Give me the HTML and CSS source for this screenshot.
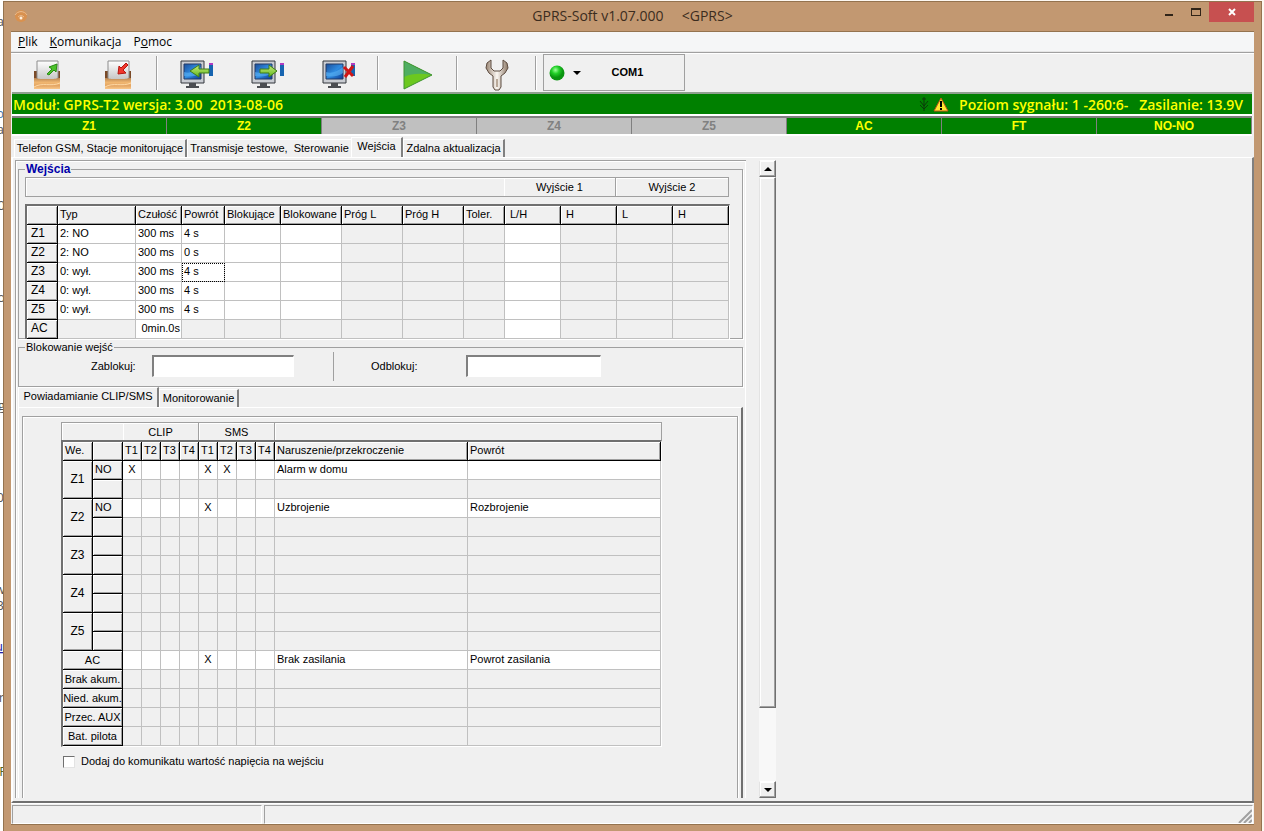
FILE: index.html
```html
<!DOCTYPE html>
<html lang="pl">
<head>
    <meta charset="UTF-8">
    <meta name="viewport" content="width=device-width, initial-scale=1.0">
    <title>GPRS-Soft v1.07.000</title>
    <link rel="stylesheet" href="styles.css">
</head>
<body>
    <!-- page visible behind the window -->
    <svg class="behind" width="3" height="831" aria-hidden="true">
        <g font-family="Open Sans, sans-serif" font-size="13" text-anchor="end" fill="#555">
            <text x="4" y="26">a</text>
            <text x="4" y="118" fill="#47a">b</text>
            <text x="4" y="134">a</text>
            <text x="5" y="210">0</text>
            <text x="5" y="302">o</text>
            <text x="5" y="410">g</text>
            <text x="4" y="502">0</text>
            <text x="5" y="594">w</text>
            <text x="4" y="610">3</text>
            <text x="3" y="651" fill="#22a" text-decoration="underline">u</text>
            <text x="4" y="702">r</text>
            <text x="6" y="776" fill="#562">F</text>
        </g>
    </svg>

    <div class="window">
        <header class="titlebar">
            <svg class="app-icon" width="16" height="16" viewBox="0 0 16 16">
                <circle cx="8" cy="8" r="6" fill="#d9914f"/>
                <path d="M2 7a7 7 0 0 1 12 0M5 9a4 4 0 0 1 6 0" fill="none" stroke="#e8bd92"/>
                <circle cx="8" cy="10" r="1.500" fill="#fff0dd"/>
            </svg>
            <h1>GPRS-Soft v1.07.000 &nbsp;&nbsp;&nbsp; &lt;GPRS&gt;</h1>
            <div class="window-buttons">
                <button type="button" aria-label="Minimalizuj"><svg width="10" height="10"><path d="M1 7h8v2H1z" fill="#302418"/></svg></button>
                <button type="button" aria-label="Maksymalizuj"><svg width="10" height="10"><path d="M0 1h10v8H0zM1 3v5h8V3z" fill="#302418" fill-rule="evenodd"/></svg></button>
                <button type="button" class="close" aria-label="Zamknij"><svg width="8" height="8"><path d="M1 1l6 6M7 1l-6 6" stroke="#fff" stroke-width="2"/></svg></button>
            </div>
        </header>

        <div class="client">
            <nav class="menu">
                <button type="button"><u>P</u>lik</button>
                <button type="button"><u>K</u>omunikacja</button>
                <button type="button">P<u>o</u>moc</button>
            </nav>

            <div class="toolbar">
                <svg class="defs" width="0" height="0">
                    <defs>
                        <linearGradient id="wood" x2="0" y2="1"><stop offset="0" stop-color="#b98655"/><stop offset=".4" stop-color="#f0b670"/><stop offset=".7" stop-color="#e3a564"/><stop offset="1" stop-color="#fac889"/></linearGradient>
                        <linearGradient id="screen" x2="1" y2="1"><stop offset="0" stop-color="#1a4f9c"/><stop offset=".5" stop-color="#2f8be0"/><stop offset="1" stop-color="#0c3c96"/></linearGradient>
                        <linearGradient id="lime" x2="0" y2="1"><stop offset="0" stop-color="#c9ef7a"/><stop offset="1" stop-color="#5fb51c"/></linearGradient>
                        <linearGradient id="steel" x2="1"><stop offset="0" stop-color="#9a8674"/><stop offset=".5" stop-color="#fbf7f2"/><stop offset="1" stop-color="#8b7765"/></linearGradient>
                        <linearGradient id="paper" x2="0" y2="1"><stop offset="0" stop-color="#fff"/><stop offset="1" stop-color="#c4c4c4"/></linearGradient>
                        <radialGradient id="led" cx=".4" cy=".3"><stop offset="0" stop-color="#a0ff9c"/><stop offset=".5" stop-color="#22d028"/><stop offset="1" stop-color="#0a9410"/></radialGradient>
                        <g id="box">
                            <path d="M1 11h26v18H1z" fill="#7a4a28"/>
                            <path d="M4 1h21v19H4z" fill="url(#paper)" stroke="#8d8d8d"/>
                            <path d="M1 18c4 0 3 1 8 1h10c5 0 4-1 8-1v11H1z" fill="url(#wood)"/>
                            <path d="M1 27c8-5 17 0 26-4" fill="none" stroke="#ffd9a5"/>
                        </g>
                        <g id="monitor">
                            <path d="M1 1h23v22H1z" fill="#c9ccd2" stroke="#33363c"/>
                            <path d="M4 4h17v15H4z" fill="url(#screen)" stroke="#223a66"/>
                            <path d="M4 12c6 2 12-1 17-5v6c-6 4-11 4-17 3z" fill="#5cb4f5" opacity=".6"/>
                            <path d="M9 23h7v3h3v2H6v-2h3z" fill="#4b4d52"/>
                            <path d="M29 3h4v13h-4z" fill="#1664b0"/><path d="M29 3h4v2h-4z" fill="#b03bc0"/>
                        </g>
                    </defs>
                </svg>
                <button type="button" class="tool" aria-label="Otwórz"><svg width="28" height="30"><use href="#box"/><path d="M14 14l5-5-3-2 8-3-1 8-2-2-5 5z" fill="#4cc22c" stroke="#2a8b16"/></svg></button>
                <button type="button" class="tool" aria-label="Zapisz"><svg width="28" height="30"><use href="#box"/><path d="M22 3l-5 5-2-2-1 8 8-1-3-3 5-5z" fill="#f0372c" stroke="#b5150f"/></svg></button>
                <span class="sep"></span>
                <button type="button" class="tool" aria-label="Odczyt"><svg width="34" height="30"><use href="#monitor"/><path d="M10 11l9-6v4h10v4H19v4z" fill="url(#lime)" stroke="#3f7d18"/></svg></button>
                <button type="button" class="tool" aria-label="Wyślij"><svg width="34" height="30"><use href="#monitor"/><path d="M26 11l-8-6v4H9v4h9v4z" fill="url(#lime)" stroke="#3f7d18"/></svg></button>
                <button type="button" class="tool" aria-label="Rozłącz"><svg width="34" height="30"><use href="#monitor"/><path d="M22 7l9 9M31 6l-8 11" stroke="#cf1616" stroke-width="3"/></svg></button>
                <span class="sep"></span>
                <button type="button" class="tool" aria-label="Start"><svg width="30" height="30"><path d="M1 1v28l28-14z" fill="#6cc81f"/><path d="M1 1v16c8-4 18-4 28-2z" fill="#4fae62"/><path d="M1 1v28l28-14z" fill="none" stroke="#3f9430"/></svg></button>
                <span class="sep"></span>
                <button type="button" class="tool" aria-label="Ustawienia"><svg width="24" height="32"><path d="M6 1L2 4 1 9l3 5 4 3v11l2 3h4l2-3V17l4-3 3-5-1-5-4-3v8l-3 3H9L6 9z" fill="url(#steel)" stroke="#5d4c40"/><path d="M11 20h2v8h-2z" fill="#b9a999"/></svg></button>
                <span class="sep"></span>
                <button type="button" class="port">
                    <svg width="16" height="16"><circle cx="8" cy="8" r="7.500" fill="url(#led)"/></svg>
                    <svg width="8" height="4"><path d="M0 0h8L4 4z"/></svg>
                    <span>COM1</span>
                </button>
            </div>

            <div class="device">
                <span>Moduł: GPRS-T2 wersja: 3.00 &nbsp;2013-08-06</span>
                <span class="signal">
                    <svg width="10" height="14"><path d="M5 0v14M1 4l4 5 4-5M1 8l4 4 4-4M3 2h4" fill="none" stroke="#0a3a0a"/></svg>
                    <svg width="16" height="15"><path d="M8 1l7 13H1z" fill="#ffe92e" stroke="#c4521a"/><path d="M7 4h2v6H7zM7 11h2v2H7z"/></svg>
                    <span>Poziom sygnału: 1 -260:6- &nbsp;&nbsp;Zasilanie: 13.9V</span>
                </span>
            </div>

            <div class="zones">
                <span>Z1</span><span>Z2</span><span class="off">Z3</span><span class="off">Z4</span><span class="off">Z5</span><span>AC</span><span>FT</span><span>NO-NO</span>
            </div>

            <div class="tabs main-tabs">
                <button type="button" class="tab t1">Telefon GSM, Stacje monitorujące</button>
                <button type="button" class="tab t2">Transmisje testowe, &nbsp;Sterowanie</button>
                <button type="button" class="tab t3 active">Wejścia</button>
                <button type="button" class="tab t4">Zdalna aktualizacja</button>
            </div>

            <main class="page">
                <div class="panel">
                    <fieldset class="group">
                        <legend class="title">Wejścia</legend>
                        <div class="band outputs"><span></span><span>Wyjście 1</span><span>Wyjście 2</span></div>
                        <div class="sunken">
                            <table class="inputs">
                                <colgroup>
                                    <col class="c31"><col class="c78"><col class="c46"><col class="c43"><col class="c56"><col class="c61"><col class="c61"><col class="c61"><col class="c41"><col class="c56"><col class="c56"><col class="c56"><col class="c56">
                                </colgroup>
                                <thead>
                                    <tr><th></th><th>Typ</th><th>Czułość</th><th>Powrót</th><th>Blokujące</th><th>Blokowane</th><th>Próg L</th><th>Próg H</th><th>Toler.</th><th>L/H</th><th>H</th><th>L</th><th>H</th></tr>
                                </thead>
                                <tbody>
                                    <tr><th>Z1</th><td class="on">2: NO</td><td class="on">300 ms</td><td class="on">4 s</td><td class="on"></td><td class="on"></td><td></td><td></td><td></td><td class="on"></td><td></td><td></td><td></td></tr>
                                    <tr><th>Z2</th><td class="on">2: NO</td><td class="on">300 ms</td><td class="on">0 s</td><td class="on"></td><td class="on"></td><td></td><td></td><td></td><td class="on"></td><td></td><td></td><td></td></tr>
                                    <tr><th>Z3</th><td class="on">0: wył.</td><td class="on">300 ms</td><td class="on focus">4 s</td><td class="on"></td><td class="on"></td><td></td><td></td><td></td><td class="on"></td><td></td><td></td><td></td></tr>
                                    <tr><th>Z4</th><td class="on">0: wył.</td><td class="on">300 ms</td><td class="on">4 s</td><td class="on"></td><td class="on"></td><td></td><td></td><td></td><td class="on"></td><td></td><td></td><td></td></tr>
                                    <tr><th>Z5</th><td class="on">0: wył.</td><td class="on">300 ms</td><td class="on">4 s</td><td class="on"></td><td class="on"></td><td></td><td></td><td></td><td class="on"></td><td></td><td></td><td></td></tr>
                                    <tr><th>AC</th><td></td><td class="on right">0min.0s</td><td></td><td></td><td></td><td></td><td></td><td></td><td class="on"></td><td></td><td></td><td></td></tr>
                                </tbody>
                            </table>
                        </div>
                    </fieldset>

                    <fieldset>
                        <legend>Blokowanie wejść</legend>
                        <div class="locks">
                            <label for="lock">Zablokuj:</label>
                            <input type="text" id="lock">
                            <span class="divider"></span>
                            <label for="unlock">Odblokuj:</label>
                            <input type="text" id="unlock" class="short">
                        </div>
                    </fieldset>

                    <div class="tabs sub-tabs">
                        <button type="button" class="tab s1 active">Powiadamianie CLIP/SMS</button>
                        <button type="button" class="tab s2">Monitorowanie</button>
                    </div>

                    <div class="sub-page">
                        <div class="frame">
                            <div class="band channels"><span></span><span>CLIP</span><span>SMS</span><span></span></div>
                            <div class="sunken">
                                <table class="events">
                                    <colgroup>
                                        <col class="c30"><col class="c30"><col class="c19"><col class="c19"><col class="c19"><col class="c19"><col class="c19"><col class="c19"><col class="c19"><col class="c19"><col class="c193"><col class="c193">
                                    </colgroup>
                                    <thead>
                                        <tr><th>We.</th><th></th><th>T1</th><th>T2</th><th>T3</th><th>T4</th><th>T1</th><th>T2</th><th>T3</th><th>T4</th><th>Naruszenie/przekroczenie</th><th>Powrót</th></tr>
                                    </thead>
                                    <tbody>
                                        <tr class="on"><th rowspan="2">Z1</th><th class="kind">NO</th><td>X</td><td></td><td></td><td></td><td>X</td><td>X</td><td></td><td></td><td>Alarm w domu</td><td></td></tr>
                                        <tr><th></th><td></td><td></td><td></td><td></td><td></td><td></td><td></td><td></td><td></td><td></td></tr>
                                        <tr class="on"><th rowspan="2">Z2</th><th class="kind">NO</th><td></td><td></td><td></td><td></td><td>X</td><td></td><td></td><td></td><td>Uzbrojenie</td><td>Rozbrojenie</td></tr>
                                        <tr><th></th><td></td><td></td><td></td><td></td><td></td><td></td><td></td><td></td><td></td><td></td></tr>
                                        <tr><th rowspan="2">Z3</th><th></th><td></td><td></td><td></td><td></td><td></td><td></td><td></td><td></td><td></td><td></td></tr>
                                        <tr><th></th><td></td><td></td><td></td><td></td><td></td><td></td><td></td><td></td><td></td><td></td></tr>
                                        <tr><th rowspan="2">Z4</th><th></th><td></td><td></td><td></td><td></td><td></td><td></td><td></td><td></td><td></td><td></td></tr>
                                        <tr><th></th><td></td><td></td><td></td><td></td><td></td><td></td><td></td><td></td><td></td><td></td></tr>
                                        <tr><th rowspan="2">Z5</th><th></th><td></td><td></td><td></td><td></td><td></td><td></td><td></td><td></td><td></td><td></td></tr>
                                        <tr><th></th><td></td><td></td><td></td><td></td><td></td><td></td><td></td><td></td><td></td><td></td></tr>
                                        <tr class="on"><th colspan="2">AC</th><td></td><td></td><td></td><td></td><td>X</td><td></td><td></td><td></td><td>Brak zasilania</td><td>Powrot zasilania</td></tr>
                                        <tr><th colspan="2">Brak akum.</th><td></td><td></td><td></td><td></td><td></td><td></td><td></td><td></td><td></td><td></td></tr>
                                        <tr><th colspan="2">Nied. akum.</th><td></td><td></td><td></td><td></td><td></td><td></td><td></td><td></td><td></td><td></td></tr>
                                        <tr><th colspan="2">Przec. AUX</th><td></td><td></td><td></td><td></td><td></td><td></td><td></td><td></td><td></td><td></td></tr>
                                        <tr><th colspan="2">Bat. pilota</th><td></td><td></td><td></td><td></td><td></td><td></td><td></td><td></td><td></td><td></td></tr>
                                    </tbody>
                                </table>
                            </div>
                            <label class="check"><input type="checkbox"> Dodaj do komunikatu wartość napięcia na wejściu</label>
                        </div>
                    </div>
                </div>

                <div class="scrollbar">
                    <button type="button" aria-label="W górę"><svg width="8" height="4"><path d="M0 4h8L4 0z"/></svg></button>
                    <div class="thumb"></div>
                    <div class="track"></div>
                    <button type="button" aria-label="W dół"><svg width="8" height="4"><path d="M0 0h8L4 4z"/></svg></button>
                </div>
            </main>

            <footer class="status">
                <span class="cell first"></span>
                <span class="cell"><svg width="14" height="14"><path d="M1 14L14 1M6 14l8-8M11 14l3-3" stroke="#a0a0a0" stroke-width="2"/></svg></span>
            </footer>
        </div>
    </div>
</body>
</html>
```

FILE: styles.css
```css
* {
    box-sizing: border-box;
}
body {
    margin: 0;
    height: 100vh;
    display: flex;
    overflow: hidden;
    background: #fdf8f2;
    font-family: "Liberation Sans", Arial, sans-serif;
    font-size: 11px;
    line-height: 13px;
    color: #000;
}
button {
    font: inherit;
    color: inherit;
    margin: 0;
    padding: 0;
    border: 0;
    background: none;
}
svg {
    display: block;
    flex: none;
}
.behind {
    background: #fff;
}
.defs {
    position: absolute;
}

/* window */
.window {
    flex: 1;
    min-width: 0;
    margin: 1px 2px 0 0;
    padding: 0 7px 6px;
    display: flex;
    flex-direction: column;
    background: #c29871;
    border: 1px solid #94734f;
    border-bottom: 0;
}
.titlebar {
    height: 29px;
    display: grid;
    grid-template-columns: 1fr auto 1fr;
    align-items: start;
}
.app-icon {
    margin: 6px 0 0 2px;
}
.titlebar h1 {
    margin: 4px 0 0;
    font: 14px/20px "Open Sans", sans-serif;
    color: #3b2c1e;
}
.window-buttons {
    justify-self: end;
    display: flex;
    height: 20px;
}
.window-buttons button {
    width: 27px;
    display: flex;
    align-items: center;
    justify-content: center;
}
.window-buttons .close {
    width: 45px;
    background: #c75050;
}
.client {
    flex: 1;
    min-height: 0;
    display: flex;
    flex-direction: column;
    background: #f0f0f0;
    border: 1px solid #94734f;
    border-width: 1px 0;
}

/* menu and toolbar */
.menu {
    height: 20px;
    display: flex;
    gap: 12px;
    padding-left: 7px;
    background: #f5f6f7;
    border-bottom: 1px solid #e6e6e6;
    font: 12px/19px "Open Sans", sans-serif;
}
.toolbar {
    height: 40px;
    display: flex;
    border-top: 1px solid #a0a0a0;
    box-shadow: inset 0 1px #fff;
    padding-top: 1px;
}
.tool {
    width: 71px;
    padding-top: 3px;
    display: flex;
    align-items: center;
    justify-content: center;
}
.sep {
    width: 8px;
    margin: 2px 0;
    background: linear-gradient(90deg, #a0a0a0 1px, #fff 1px, #fff 2px, transparent 2px) 3px 0 no-repeat;
}
.port {
    width: 142px;
    height: 37px;
    margin-left: 3px;
    padding-left: 5px;
    display: flex;
    align-items: center;
    gap: 8px;
    border: 1px solid #a0a0a0;
    font-weight: bold;
}
.port span {
    flex: 1;
    padding-right: 18px;
}
.device {
    height: 24px;
    margin: 0 2px 0 1px;
    padding-left: 1px;
    display: flex;
    justify-content: space-between;
    align-items: center;
    background: #008000;
    border-top: 2px solid #8fa08f;
    border-bottom: 2px solid #fff;
    color: #ff0;
    font-family: "Open Sans", sans-serif;
    font-size: 14px;
    font-weight: 600;
}
.signal {
    display: flex;
    align-items: center;
    gap: 4px;
    padding-right: 9px;
}
.signal span {
    padding-left: 6px;
}
.zones {
    height: 20px;
    margin: 0 2px 0 1px;
    display: flex;
    border-top: 2px solid #808080;
    border-bottom: 2px solid #fff;
}
.zones span {
    flex: 1;
    border-right: 1px solid #808080;
    background: #008000;
    color: #ff0;
    font-weight: bold;
    font-size: 12px;
    line-height: 17px;
    text-align: center;
}
.zones .off {
    background: #c0c0c0;
    color: #808080;
}

/* tabs */
.tabs {
    display: flex;
    align-items: flex-end;
}
.tab {
    height: 18px;
    border-right: 2px solid #808080;
    border-top: 1px solid #fff;
    border-left: 1px solid #fff;
    white-space: nowrap;
}
.tab.active {
    height: 20px;
    padding-bottom: 3px;
}
.main-tabs {
    height: 21px;
    padding-left: 3px;
}
.t1 {
    width: 173px;
}
.t2 {
    width: 164px;
    border-right: 0;
}
.t3 {
    width: 52px;
}
.t4 {
    width: 102px;
}

.page {
    flex: 1;
    min-height: 0;
    display: flex;
    border-top: 1px solid #fff;
    border-left: 2px solid #fff;
    border-right: 2px solid #808080;
    border-bottom: 2px solid #707070;
    padding: 2px 0 3px 2px;
}
.panel {
    width: 731px;
    display: flex;
    flex-direction: column;
    padding: 2px 3px 0 2px;
    border: solid #a0a0a0;
    border-width: 1px 0 0 1px;
    box-shadow: inset 1px 1px #fff, inset -1px 0 #fff;
}
fieldset {
    margin: 0;
    padding: 1px 11px 0 6px;
    min-width: 0;
    border: 1px solid #a0a0a0;
    box-shadow: 1px 1px #fff;
}
legend {
    padding: 0 1px;
}
.title {
    color: #00a;
    font-weight: bold;
    font-size: 12px;
}
/* the last grid row sits on the frame */
.group {
    margin-bottom: 2px;
}
.group .sunken {
    margin-bottom: -1px;
    border-bottom: 0;
}

/* header bands over the tables */
.band {
    display: flex;
    border: 1px solid #a0a0a0;
    text-align: center;
}
.band span {
    border-right: 1px solid #a0a0a0;
    box-shadow: inset 1px 1px #fff;
}
.outputs {
    width: 704px;
    height: 20px;
    margin-bottom: 7px;
    line-height: 18px;
}
.outputs span {
    width: 112px;
}
.outputs span:first-child {
    flex: 1;
    border-right: 0;
}
.outputs span:last-child, .channels span:last-child {
    border-right: 0;
}
.channels {
    width: 601px;
    height: 18px;
    border-bottom: 0;
    line-height: 18px;
}
.channels span {
    width: 76px;
}
.channels span:first-child {
    width: 61px;
    border-right: 0;
}
.channels span:last-child {
    flex: 1;
}

/* tables */
.sunken {
    width: max-content;
    border: solid;
    border-width: 2px 1px 1px 2px;
    border-color: #707070 #fff #fff #707070;
}
.inputs {
    width: 702px;
}
.events {
    width: 598px;
}
table {
    table-layout: fixed;
    border-spacing: 0;
}
.c19 { width: 19px; }
.c30 { width: 30px; }
.c31 { width: 31px; }
.c41 { width: 41px; }
.c43 { width: 43px; }
.c46 { width: 46px; }
.c56 { width: 56px; }
.c61 { width: 61px; }
.c78 { width: 78px; }
.c193 { width: 193px; }
th, td {
    height: 19px;
    padding: 0 0 1px 2px;
    border-right: 1px solid #c0c0c0;
    border-bottom: 1px solid #c0c0c0;
    font-weight: normal;
    text-align: left;
    white-space: nowrap;
    overflow: hidden;
}
th {
    border-color: #000;
    box-shadow: inset 1px 1px #fff, inset -1px -1px #a0a0a0;
}
.inputs tbody th {
    padding-left: 4px;
    font-size: 12px;
}
.inputs th:nth-child(n+10) {
    padding-left: 5px;
}
td.on, .on td {
    background: #fff;
}
.focus {
    outline: 1px dotted #000;
    outline-offset: -1px;
}
td.right {
    padding-right: 1px;
    text-align: right;
}
.events tbody th {
    padding: 0;
    text-align: center;
}
.events tbody .kind {
    padding: 0 0 1px 2px;
    text-align: left;
}
.events th[rowspan] {
    font-size: 12px;
}
.events td:not(:nth-last-child(-n+2)) {
    padding: 0 0 1px;
    text-align: center;
}

/* lock fields */
.locks {
    height: 31px;
    display: flex;
    align-items: center;
    padding-left: 66px;
    padding-bottom: 9px;
}
.locks label {
    width: 61px;
}
input[type="text"] {
    width: 142px;
    height: 22px;
    padding: 0 3px;
    font: inherit;
    background: #fff;
    border: solid;
    border-width: 2px 1px 1px 2px;
    border-color: #808080 #fff #fff #808080;
}
.locks .short {
    width: 135px;
}
.divider {
    width: 1px;
    height: 29px;
    margin: 0 37px 0 39px;
    background: #a0a0a0;
}
.divider + label {
    width: 95px;
}

/* notifications */
.sub-tabs {
    height: 20px;
}
.s1 {
    width: 141px;
}
.s2 {
    width: 80px;
}
.sub-page {
    flex: 1;
    min-height: 0;
    padding: 8px 3px 0;
    border: solid #fff;
    border-width: 1px 2px 0 1px;
    border-right-color: #707070;
}
.frame {
    height: 100%;
    padding: 5px 0 0 38px;
    border: solid #a0a0a0;
    border-width: 1px 1px 0;
    box-shadow: inset 1px 1px #fff, 1px 0 #fff;
}
.check {
    display: flex;
    align-items: center;
    gap: 6px;
    margin: 8px 0 0 2px;
}
.check input {
    appearance: none;
    width: 12px;
    height: 12px;
    margin: 0;
    background: #fff;
    border: 1px solid;
    border-color: #707070 #e3e3e3 #e3e3e3 #707070;
}

/* scrollbar */
.scrollbar {
    width: 17px;
    margin-left: 13px;
    display: flex;
    flex-direction: column;
}
.scrollbar button, .thumb {
    border: 1px solid;
    border-color: #fff #707070 #707070 #e3e3e3;
    box-shadow: inset -1px -1px #a0a0a0, inset 1px 1px #fff;
}
.scrollbar button {
    height: 17px;
    display: flex;
    align-items: center;
    justify-content: center;
}
.thumb {
    flex: 531;
}
.track {
    flex: 73;
    background: #f8f8f8;
}

/* status bar */
.status {
    height: 21px;
    display: flex;
    gap: 2px;
    padding: 1px 1px 0;
    border-top: 1px solid #fff;
}
.cell {
    flex: 1;
    display: flex;
    align-items: flex-end;
    justify-content: flex-end;
    border: 1px solid;
    border-color: #a0a0a0 #fff #fff #a0a0a0;
}
.first {
    flex: none;
    width: 250px;
}
```
